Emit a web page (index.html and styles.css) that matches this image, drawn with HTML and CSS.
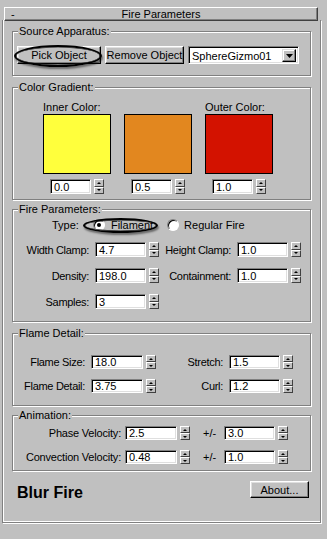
FILE: index.html
```html
<!DOCTYPE html>
<html>
<head>
<meta charset="utf-8">
<title>Fire Parameters</title>
<link rel="stylesheet" href="styles.css">
</head>
<body>
<div class="rollout">
  <div class="rtitle"><span class="minus">-</span><span class="rname">Fire Parameters</span><span></span></div>

  <div class="grp g-src">
    <div class="gt">Source Apparatus:</div>
    <div class="src-row">
      <div class="btn pick">Pick Object<span class="ring ring-pick"></span></div>
      <div class="btn remove">Remove Object</div>
      <div class="combo">
        <span class="combo-text">SphereGizmo01</span>
        <span class="combo-btn"><svg width="7" height="4" viewBox="0 0 7 4"><polygon points="0,0 7,0 3.5,4" fill="#000"/></svg></span>
      </div>
    </div>
  </div>

  <div class="grp g-color">
    <div class="gt">Color Gradient:</div>
    <div class="swatches">
      <div class="sw-col">
        <div class="sw-label">Inner Color:</div>
        <div class="swatch sw-yellow"></div>
        <div class="spinbox sb-sw"><div class="field w41">0.0</div><div class="spin"><span class="su"></span><span class="sd"></span></div></div>
      </div>
      <div class="sw-col">
        <div class="sw-label"></div>
        <div class="swatch sw-orange"></div>
        <div class="spinbox sb-sw"><div class="field w41">0.5</div><div class="spin"><span class="su"></span><span class="sd"></span></div></div>
      </div>
      <div class="sw-col">
        <div class="sw-label">Outer Color:</div>
        <div class="swatch sw-red"></div>
        <div class="spinbox sb-sw"><div class="field w41">1.0</div><div class="spin"><span class="su"></span><span class="sd"></span></div></div>
      </div>
    </div>
  </div>

  <div class="grp g-fire">
    <div class="gt">Fire Parameters:</div>
    <div class="type-row">
      <span class="type-label">Type:</span>
      <span class="opt opt-fil"><span class="radio on"></span><span>Filament</span><span class="ring ring-fil"></span></span>
      <span class="opt opt-reg"><span class="radio"></span><span>Regular Fire</span></span>
    </div>
    <div class="grid3">
      <div class="lbl">Width Clamp:</div>
      <div class="spinbox"><div class="field w51">4.7</div><div class="spin"><span class="su"></span><span class="sd"></span></div></div>
      <div class="lbl">Height Clamp:</div>
      <div class="spinbox"><div class="field w51">1.0</div><div class="spin"><span class="su"></span><span class="sd"></span></div></div>

      <div class="lbl">Density:</div>
      <div class="spinbox"><div class="field w51">198.0</div><div class="spin"><span class="su"></span><span class="sd"></span></div></div>
      <div class="lbl">Containment:</div>
      <div class="spinbox"><div class="field w51">1.0</div><div class="spin"><span class="su"></span><span class="sd"></span></div></div>

      <div class="lbl">Samples:</div>
      <div class="spinbox"><div class="field w51">3</div><div class="spin"><span class="su"></span><span class="sd"></span></div></div>
    </div>
  </div>

  <div class="grp g-flame">
    <div class="gt">Flame Detail:</div>
    <div class="grid4">
      <div class="lbl">Flame Size:</div>
      <div class="spinbox"><div class="field w52">18.0</div><div class="spin"><span class="su"></span><span class="sd"></span></div></div>
      <div class="lbl">Stretch:</div>
      <div class="spinbox"><div class="field w51">1.5</div><div class="spin"><span class="su"></span><span class="sd"></span></div></div>

      <div class="lbl">Flame Detail:</div>
      <div class="spinbox"><div class="field w52">3.75</div><div class="spin"><span class="su"></span><span class="sd"></span></div></div>
      <div class="lbl">Curl:</div>
      <div class="spinbox"><div class="field w51">1.2</div><div class="spin"><span class="su"></span><span class="sd"></span></div></div>
    </div>
  </div>

  <div class="grp g-anim">
    <div class="gt">Animation:</div>
    <div class="arows">
      <div class="arow">
        <div class="alabel">Phase Velocity:</div>
        <div class="spinbox"><div class="field w52">2.5</div><div class="spin"><span class="su"></span><span class="sd"></span></div></div>
        <div class="pm">+/-</div>
        <div class="spinbox"><div class="field w51">3.0</div><div class="spin"><span class="su"></span><span class="sd"></span></div></div>
      </div>
      <div class="arow">
        <div class="alabel">Convection Velocity:</div>
        <div class="spinbox"><div class="field w52">0.48</div><div class="spin"><span class="su"></span><span class="sd"></span></div></div>
        <div class="pm">+/-</div>
        <div class="spinbox"><div class="field w51">1.0</div><div class="spin"><span class="su"></span><span class="sd"></span></div></div>
      </div>
    </div>
  </div>

  <div class="bottom">
    <div class="brand">Blur Fire</div>
    <div class="btn about">About...</div>
  </div>
</div>
</body>
</html>
```

FILE: styles.css
```css
* { box-sizing: border-box; }
html, body { margin: 0; padding: 0; }
body {
  background: #c0c0c0;
  font-family: "Liberation Sans", Arial, sans-serif;
  font-size: 11px;
  color: #000;
  width: 327px;
  height: 539px;
  overflow: hidden;
}

.rollout {
  margin: 20px 0 0 2px;
  width: 319px;
  height: 503px;
  border: 1px solid #808080;
  border-top: none;
  box-shadow: 1px 1px 0 #fff, inset 1px -1px 0 #fff;
  display: flex;
  flex-direction: column;
}

.rtitle {
  margin: -13px 0 0 1px;
  width: 314px;
  height: 14px;
  border: 1px solid;
  border-color: #fff #404040 #404040 #fff;
  box-shadow: inset -1px -1px 0 #808080;
  background: #c0c0c0;
  display: grid;
  grid-template-columns: 1fr auto 1fr;
  align-items: center;
  line-height: 12px;
  font-size: 11px;
}
.minus { padding-left: 6px; }

.grp {
  width: 299px;
  margin-left: 9px;
  border: 1px solid #808080;
  box-shadow: 1px 1px 0 #fff, inset 1px 1px 0 #fff;
  flex: none;
}
.g-src { margin-top: 10px; height: 45px; }
.g-color { margin-top: 11px; height: 113px; }
.g-fire { margin-top: 9px; height: 113px; }
.g-flame { margin-top: 11px; height: 73px; }
.g-anim { margin-top: 9px; height: 56px; }

.gt {
  width: max-content;
  margin: -7px 0 0 5px;
  padding: 0 1px;
  height: 13px;
  line-height: 13px;
  background: #c0c0c0;
}

/* buttons */
.btn {
  height: 18px;
  border: 1px solid;
  border-color: #fff #000 #000 #fff;
  box-shadow: inset -1px -1px 0 #808080, inset 1px 1px 0 #dfdfdf;
  background: #c0c0c0;
  display: flex;
  align-items: center;
  justify-content: center;
  flex: none;
  white-space: nowrap;
}
.src-row {
  display: flex;
  gap: 4px;
  margin: 8px 0 0 4px;
}
.pick { width: 84px; position: relative; }
.remove { width: 79px; }

.ring {
  position: absolute;
  border: 2px solid #000;
  border-radius: 50%;
  box-shadow: 1px 2px 2px rgba(0, 0, 0, 0.45), inset 0 0 0 0.5px #222;
  pointer-events: none;
}
.ring-pick { left: -4px; right: -2px; top: -2px; bottom: -4px; }
.ring-fil { left: -10px; right: -5px; top: -1px; bottom: -2px; }

.combo {
  width: 111px;
  height: 18px;
  background: #fff;
  border: 1px solid;
  border-color: #808080 #fff #fff #808080;
  box-shadow: inset 1px 1px 0 #000, inset -1px -1px 0 #dfdfdf;
  display: flex;
  align-items: center;
  padding: 2px 2px 1px 3px;
  flex: none;
}
.combo-text { flex: 1; font-size: 11px; }
.combo-btn {
  width: 14px;
  height: 13px;
  background: #c0c0c0;
  border: 1px solid;
  border-color: #dfdfdf #000 #000 #dfdfdf;
  box-shadow: inset -1px -1px 0 #808080, inset 1px 1px 0 #fff;
  display: flex;
  align-items: center;
  justify-content: center;
}

/* colour gradient */
.swatches {
  display: flex;
  gap: 13px;
  margin: 7px 0 0 30px;
}
.sw-col {
  width: 68px;
  display: flex;
  flex-direction: column;
}
.sw-label { height: 13px; line-height: 12px; }
.swatch {
  height: 60px;
  border: 1px solid #000;
}
.sw-yellow { background: #ffff3c; }
.sw-orange { background: #e2871f; }
.sw-red { background: #d31200; }
.sb-sw { align-self: center; height: 15px; margin-top: 5px; }

/* spinners */
.spinbox { display: flex; gap: 3px; }
.field {
  flex: none;
  height: 100%;
  background: #fff;
  border: 1px solid;
  border-color: #808080 #fff #fff #808080;
  box-shadow: inset 1px 1px 0 #000, inset -1px -1px 0 #dfdfdf;
  padding-left: 3px;
  display: flex;
  align-items: center;
}
.w41 { width: 41px; }
.w51 { width: 51px; }
.w52 { width: 52px; }
.spin {
  width: 10px;
  flex: none;
  display: flex;
  flex-direction: column;
}
.spin span {
  flex: 1;
  background: #c0c0c0;
  border: 1px solid;
  border-color: #fff #404040 #404040 #fff;
  display: flex;
  align-items: center;
  justify-content: center;
}
.su::after {
  content: "";
  border-left: 2px solid transparent;
  border-right: 2px solid transparent;
  border-bottom: 2px solid #000;
}
.sd::after {
  content: "";
  border-left: 2px solid transparent;
  border-right: 2px solid transparent;
  border-top: 2px solid #000;
}

/* fire parameters */
.type-row {
  display: flex;
  align-items: center;
  height: 14px;
  margin: 2px 0 0 39px;
}
.opt {
  display: flex;
  align-items: center;
  position: relative;
}
.opt-fil { margin-left: 14px; }
.opt-reg { margin-left: 14px; }
.radio {
  width: 12px;
  height: 12px;
  border-radius: 50%;
  background: #fff;
  border: 1px solid;
  border-color: #808080 #fff #fff #808080;
  box-shadow: inset 1px 1px 0 #000;
  display: flex;
  align-items: center;
  justify-content: center;
  margin-right: 6px;
  flex: none;
}
.radio.on::after {
  content: "";
  width: 4px;
  height: 4px;
  border-radius: 50%;
  background: #000;
}
.opt-reg .radio { margin-right: 5px; }

.lbl {
  text-align: right;
  white-space: nowrap;
  display: flex;
  align-items: center;
  justify-content: flex-end;
  letter-spacing: -0.3px;
}
.grid3 {
  display: grid;
  grid-template-columns: 76px 64px 66px 64px;
  grid-auto-rows: 15px;
  column-gap: 6px;
  row-gap: 11px;
  margin-top: 10px;
}
.grid4 {
  display: grid;
  grid-template-columns: 72px 65px 61px 64px;
  grid-auto-rows: 14px;
  column-gap: 6px;
  row-gap: 10px;
  margin-top: 15px;
}

/* animation */
.arows {
  display: flex;
  flex-direction: column;
  gap: 10px;
  margin-top: 4px;
}
.arow {
  display: flex;
  height: 14px;
  align-items: stretch;
}
.alabel {
  width: 108px;
  margin-right: 4px;
  text-align: right;
  display: flex;
  align-items: center;
  justify-content: flex-end;
  white-space: nowrap;
  letter-spacing: -0.2px;
}
.pm {
  width: 14px;
  margin: 0 7px 0 13px;
  display: flex;
  align-items: center;
}

/* bottom */
.bottom {
  display: flex;
  justify-content: space-between;
  align-items: flex-start;
  width: 292px;
  margin: 10px 0 0 14px;
}
.brand {
  font-weight: bold;
  font-size: 16px;
  line-height: 18px;
  margin-top: 3px;
}
.about { width: 59px; height: 17px; }
```
